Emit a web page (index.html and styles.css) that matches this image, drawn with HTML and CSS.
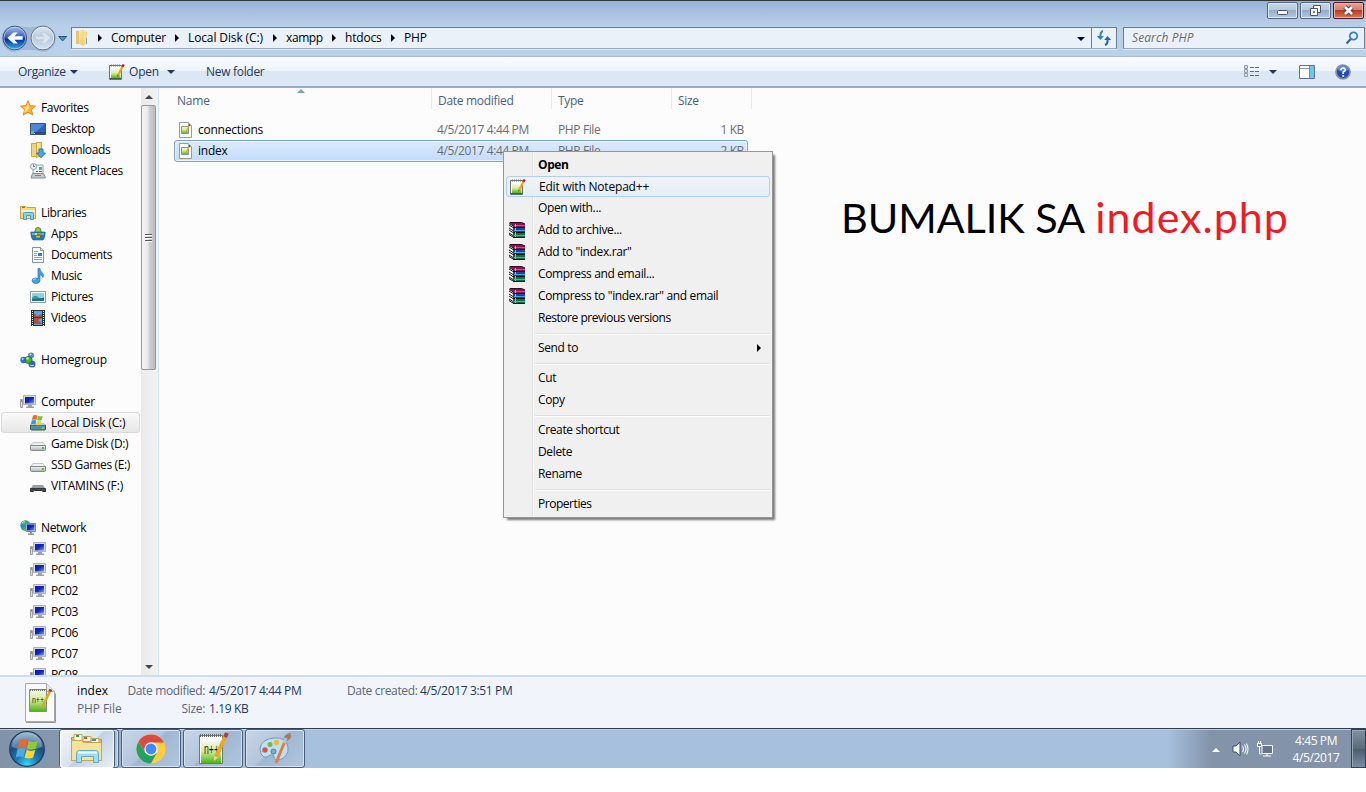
FILE: index.html
```html
<!DOCTYPE html>
<html lang="en">
<head>
<meta charset="utf-8">
<title>PHP</title>
<link rel="stylesheet" href="styles.css">
</head>
<body>
<svg class="defs" width="0" height="0">
  <defs>
    <linearGradient id="gFolder" x1="0" x2="1" y1="0" y2="1"><stop offset="0" stop-color="#fff0ae"/><stop offset="1" stop-color="#e5bf5c"/></linearGradient>
    <linearGradient id="gGreen" x1="0" x2="0" y1="0" y2="1"><stop offset="0" stop-color="#f4f8ef"/><stop offset=".45" stop-color="#d6ee9a"/><stop offset="1" stop-color="#4db314"/></linearGradient>
    <linearGradient id="gScreen" x1="0" x2="1" y1="0" y2="1"><stop offset="0" stop-color="#0a1bb0"/><stop offset=".5" stop-color="#1426b8"/><stop offset="1" stop-color="#7ba6f2"/></linearGradient>
    <linearGradient id="gDisk" x1="0" x2="0" y1="0" y2="1"><stop offset="0" stop-color="#f4f4f4"/><stop offset="1" stop-color="#aeb2b5"/></linearGradient>
    <linearGradient id="gBack" x1="0" x2="0" y1="0" y2="1"><stop offset="0" stop-color="#a9bfec"/><stop offset=".45" stop-color="#3b63c0"/><stop offset=".55" stop-color="#0a2f94"/><stop offset="1" stop-color="#2fb5f5"/></linearGradient>
    <linearGradient id="gFwd" x1="0" x2="0" y1="0" y2="1"><stop offset="0" stop-color="#dde7f2"/><stop offset=".5" stop-color="#b9cade"/><stop offset="1" stop-color="#d4e2f2"/></linearGradient>
    <radialGradient id="gOrb" cx=".5" cy=".95" r=".9"><stop offset="0" stop-color="#35dcff"/><stop offset=".35" stop-color="#1a7db5"/><stop offset=".7" stop-color="#1b4e7d"/><stop offset="1" stop-color="#7d9dbd"/></radialGradient>
    <symbol id="star" viewBox="0 0 16 16"><path d="M8 .8l2.100 4.900 5.300.4-4 3.500 1.300 5.400L8 12.200 3.300 15l1.300-5.400-4-3.500 5.300-.4z" fill="#ffb53a" stroke="#e8801c"/><path d="M8 2.500l1.300 4-1.300 4-4 2 1.300-4L2.600 7l3.700-.3z" fill="#ffe27e"/></symbol>
    <symbol id="desktop" viewBox="0 0 16 16"><path d="M.5 2.500h15v11H.5z" fill="#2c62bd" stroke="#3b506b"/><path d="M1 3h14L6 11H1z" fill="#4b86dc"/><path d="M1 11h14v2H1z" fill="#304a70"/><path d="M1 10h3v3H1z" fill="#4fbbe0"/><path d="M4 12h1v1H4z" fill="#ffe14a"/></symbol>
    <symbol id="downloads" viewBox="0 0 16 16"><path d="M1.500 1.500h5v13h-5z" fill="#f0d27a" stroke="#c9a449"/><path d="M6.500.5h5v13l-5 2z" fill="url(#gFolder)" stroke="#c9a449"/><path d="M9 7h4v4h2.500l-4.500 4.700L6.500 11H9z" fill="#49a7e4" stroke="#2477b8"/></symbol>
    <symbol id="recent" viewBox="0 0 16 16"><path d="M3 2h10v9H3z" fill="#eef3f8" stroke="#9aa6b2"/><path d="M9 4h3v3H9z" fill="#5ba2dc"/><path d="M6 8h2v1H6zM9 8h3v1H9z" fill="#1f73b8"/><path d="M2.500 10.500h11l2 4.500H1z" fill="#c4cbd2" stroke="#878f98"/><path d="M5 12h6v1H5z" fill="#7c848d"/><circle cx="3.500" cy="3.500" r="3" fill="#e9f2f7" stroke="#90a1af"/><path d="M3.500 1.500v2h1.500" fill="none" stroke="#52779a"/></symbol>
    <symbol id="libraries" viewBox="0 0 16 16"><path d="M.5 1.500h5l1 1h9v11H.5z" fill="#f3da86" stroke="#c5a24a"/><path d="M2 2h3v1H2z" fill="#3a9e40"/><path d="M1 5h14v2H1z" fill="#fbf0bc"/><path d="M3.500 14.500v-6q0-1 1-1h8q1 0 1 1v6h-3v-4h-4v4z" fill="#8fd0ee" stroke="#4b9ac4"/></symbol>
    <symbol id="apps" viewBox="0 0 16 16"><path d="M5 5q0-3.500 3-3.500T11 5v2H5z" fill="#9bc63a" stroke="#5b8b21"/><path d="M.8 6h14.400q0 6-2.200 8H3Q.8 12 .8 6z" fill="#2b78ae" stroke="#1f5d8e" stroke-width=".6"/><path d="M2 7h12v2H2z" fill="#68b4dc"/><path d="M5 7h2v2H5z" fill="#f1d333"/><path d="M7 8h3v2H7z" fill="#e54f37"/><path d="M6 10h4v1.500H6z" fill="#a4d43c"/><path d="M10 7h2v2h-2z" fill="#63bd3b"/></symbol>
    <symbol id="documents" viewBox="0 0 16 16"><path d="M2.500.5h8l3 3v12h-11z" fill="#fff" stroke="#83909e"/><path d="M10.500.5v3h3" fill="#dde5ec" stroke="#83909e"/><path d="M4 4.500h4M4 6.500h3M4 8.500h3M4 10.500h8M4 12.500h8" stroke="#8fa7bf"/><path d="M8 6h4v3H8z" fill="#2c80be"/></symbol>
    <symbol id="music" viewBox="0 0 16 16"><path d="M8 .5h2q0 2.500 2 4 2.500 2 1 5-.5-2-3-3v6q0 2.500-3.500 3T2 13q0-3 3.500-3L8 10.500z" fill="#3ba4e2" stroke="#2378b4" stroke-width=".7"/><path d="M3 12q1-1.500 3-1" stroke="#9fdcfa" fill="none"/></symbol>
    <symbol id="pictures" viewBox="0 0 16 16"><path d="M.5 2.500h15v11H.5z" fill="#fff" stroke="#8b99a6"/><path d="M2 4h12v8H2z" fill="#8bd0ef"/><path d="M2 9q3-4 6-1t6 0v4H2z" fill="#3c9d76"/><path d="M2 10l12-1v3H2z" fill="#246ba5"/></symbol>
    <symbol id="videos" viewBox="0 0 16 16"><path d="M1 0h14v16H1z" fill="#2b3137"/><path d="M4 1h8v14H4z" fill="#57a9dc"/><path d="M4 3l3 3 5-2v4l-4 2 4 4H4z" fill="#a85539"/><path d="M4 7.500h8" stroke="#263f59"/><path d="M2.500 1v15M13.500 1v15" stroke="#e7ebef" stroke-width="1" stroke-dasharray="1 1"/></symbol>
    <symbol id="homegroup" viewBox="0 0 16 16"><circle cx="3.500" cy="8" r="3.200" fill="#3769c8"/><circle cx="11" cy="3.500" r="3" fill="#547fdc"/><circle cx="12" cy="12" r="3.500" fill="#3260bf"/><circle cx="8.500" cy="8" r="3.500" fill="#3fb62c" stroke="#1d7a23"/><circle cx="7.500" cy="6.500" r="1.300" fill="#b7f29d"/><circle cx="2.700" cy="7" r="1.100" fill="#b8d3fa"/><circle cx="10.500" cy="2.400" r="1" fill="#c8ddfb"/><path d="M10 13q2 1.500 4 0" stroke="#d0e0fb" fill="none"/></symbol>
    <symbol id="pc" viewBox="0 0 16 16"><path d="M.5 5.500h2v8h-2z" fill="#d8dcdf" stroke="#9da2a7"/><path d="M1 6h1v2H1z" fill="#61b83f"/><path d="M3.500 1.500h12v9h-12z" fill="#d6d8da" stroke="#b0b3b6"/><path d="M5 3h9v6.500H5z" fill="url(#gScreen)"/><path d="M8 11h4v1.500h2V14H6v-1.500h2z" fill="#9da1a6"/></symbol>
    <symbol id="drive" viewBox="0 0 16 16"><path d="M3 6.500h10l2.500 3.500H.5z" fill="#f2f2f2" stroke="#c4c6c8"/><path d="M.5 9.500h15v4q0 1-1 1h-13q-1 0-1-1z" fill="url(#gDisk)" stroke="#85898d"/><path d="M12 11h2v2h-2z" fill="#4dc52e"/></symbol>
    <symbol id="usb" viewBox="0 0 16 16"><path d="M3 7h10l2.500 4H.5z" fill="#999da0"/><path d="M.5 10.500h15v3h-2.500l-1.500-1h-7L3 13.500H.5z" fill="#484c4f" stroke="#303336"/></symbol>
    <symbol id="windrive" viewBox="0 0 16 16"><path d="M.5 10h15v4q0 1-1 1h-13q-1 0-1-1z" fill="#598c9e" stroke="#3c5864"/><path d="M1 8h13l1 2H1z" fill="#b9cdd3"/><path d="M12 12h2v2h-2z" fill="#68df41"/><path d="M3 .5q2-1 4.500 0L6.500 5q-2.500-1-4.500 0z" fill="#ed6a2b"/><path d="M8.200.7q2 1 4.500 0l-1 4.300q-2.500 1-4.500 0z" fill="#83bf3b"/><path d="M1.800 5.500q2-1 4.500 0l-1 4q-2.500-1-4.500 0z" fill="#3c94dd"/><path d="M7 5.700q2 1 4.500 0l-1 4q-2.500 1-4.500 0z" fill="#f8ca32"/></symbol>
    <symbol id="network" viewBox="0 0 16 16"><circle cx="5.500" cy="5.500" r="5.200" fill="#2c8ad2"/><path d="M2 2q3-3 5 0L4 5 1 4zM2 7l4 1v3Q3 10 2 7z" fill="#3dba49"/><path d="M2 3q2-2 3-1" stroke="#baf0fd" fill="none"/><path d="M6 3.500h9.500v8H6z" fill="#bfc8d3" stroke="#828c98"/><path d="M7 4.500h7.500v6H7z" fill="url(#gScreen)"/><path d="M10 12h2v1.500h2V15H8v-1.500h2z" fill="#8b9ba9"/></symbol>
    <symbol id="npp" viewBox="0 0 16 16"><path d="M.5 1.500h12v14H.5z" fill="#fff" stroke="#6c6f6f"/><path d="M2 5h9.500v9H2z" fill="url(#gGreen)"/><path d="M1 14.500h11" stroke="#416039"/><path d="M2 1.500h10" stroke="#777" stroke-width="2" stroke-dasharray="1 1"/><path d="M13.500 2.500l-4.500 9" stroke="#f0a51f" stroke-width="2.300"/><path d="M14.700.5l-1.200 2.200" stroke="#9c2024" stroke-width="2.300"/><path d="M8.500 10.800l-.3 2 1.500-1.200z" fill="#4c3928"/></symbol>
    <symbol id="phpfile" viewBox="0 0 16 16"><path d="M1.500.5h9l3 3v12h-12z" fill="#fff" stroke="#999"/><path d="M10.500.5v3h3" fill="#eee" stroke="#aaa"/><path d="M3.500 4.500h7v7h-7z" fill="url(#gGreen)" stroke="#8d9389"/><path d="M11.500 3L8 10" stroke="#e6a12b" stroke-width="1.300"/><path d="M11.700 2.300l-.6 1.400" stroke="#8a1e1e" stroke-width="1.400"/></symbol>
    <symbol id="rar" viewBox="0 0 16 16"><path d="M0 .5h12.500L16 2v3.500H4z" fill="#8c1257"/><path d="M1 .5h11.500L16 2" fill="none" stroke="#2b0c1d"/><path d="M5 3.500h11" stroke="#c8508b"/><path d="M4 6h12v4.500H4z" fill="#124a93"/><path d="M5 8.500h11" stroke="#4f9fdc"/><path d="M4 5.500h12M4 10.500h12M4 15.500h12" stroke="#15101a"/><path d="M4 11h12v4H4z" fill="#0f7048"/><path d="M5 13.500h11" stroke="#3fc486"/><path d="M0 1l4 2.500V15L0 12z" fill="#f4f4f4"/><path d="M0 1.500L4.500 4M0 3l4 2.500M0 6l4 2.500M0 8l4 2.500M0 11l4 2.500M0 12.500l4 2.500" stroke="#1c161b"/><path d="M6.500 2v13" stroke="#d6b339" stroke-dasharray="3 1"/></symbol>
    <symbol id="flag" viewBox="0 0 22 20"><path d="M4 2q4-2 7 0L9.500 9q-3.500-2-7.500 0z" fill="#f0652a"/><path d="M12 2.500q4 2 8.500.5l-2 6.500q-4 2-8 0z" fill="#91c93d"/><path d="M1.700 10.300q4-2 7.500 0l-2 7.500q-3-2-7 0z" fill="#4da9e4"/><path d="M10.200 10.700q4 2 8 0l-2 7q-4 2-8 0z" fill="#ffd13b"/></symbol>
  </defs>
</svg>

<div class="window">
  <header class="frame">
    <div class="caption">
      <button class="cap"><svg width="29" height="15"><rect x="9.500" y="7.500" width="10" height="4" rx="1" fill="#f8f8f8" stroke="#4c5663"/></svg></button>
      <button class="cap"><svg width="29" height="15"><path d="M12.500 2.500h7v7h-7z" fill="#f8f8f8" stroke="#4c5663"/><path d="M9.500 5.500h7v7h-7z" fill="#f8f8f8" stroke="#4c5663"/><path d="M12.500 8.500h1v1h-1z" fill="#8da6c4" stroke="#4c5663"/></svg></button>
      <button class="cap close"><svg width="29" height="15"><path d="M11 4l7 7m0-7l-7 7" stroke="#59494f" stroke-width="4.800"/><path d="M11 4l7 7m0-7l-7 7" stroke="#fff" stroke-width="2.600"/></svg></button>
    </div>
    <div class="addressrow">
      <svg class="navbtns" width="72" height="32" viewBox="0 0 72 32">
        <path d="M15 3q14 4 28 0a13 13 0 0 1 0 27q-14-4-28 0a13 13 0 0 1 0-27z" fill="#9fb8d6"/>
        <circle cx="15" cy="16" r="12" fill="url(#gBack)" stroke="#465a7c"/><circle cx="15" cy="16" r="11" fill="none" stroke="#c1d9f4" stroke-opacity=".6"/>
        <path d="M23 14.300h-8.500l3.500-4h-4.300L7.500 16l6.200 5.700H18l-3.500-4H23z" fill="#fff"/>
        <circle cx="43.500" cy="16" r="12" fill="url(#gFwd)" stroke="#5f7289"/><circle cx="43.500" cy="16" r="11" fill="none" stroke="#eef4fb" stroke-opacity=".7"/>
        <path d="M36 14.300h8.500l-3.500-4h4.300L51.500 16l-6.200 5.700H41l3.500-4H36z" fill="#dbe5ef" stroke="#b7c6d7" stroke-width=".7"/>
        <path d="M59.500 14.500h8l-4 4.500z" fill="#4e8fc6" stroke="#244e80"/>
      </svg>
      <div class="address">
        <svg class="fold" width="16" height="18" viewBox="0 0 16 18"><path d="M2 2h5v13H2z" fill="#e7c56b"/><path d="M5 1h5v16l-5-2z" fill="url(#gFolder)"/><path d="M9 3l4-1v13l-4 2z" fill="#f5dc8a"/><path d="M12.500 9v6" stroke="#6faed5"/></svg>
        <i class="tri t1"></i><span class="c1">Computer</span><i class="tri"></i><span class="c2">Local Disk (C:)</span><i class="tri"></i><span class="c3">xampp</span><i class="tri"></i><span class="c4">htdocs</span><i class="tri"></i><span>PHP</span>
        <i class="down addrdown"></i>
        <div class="refresh"><svg width="16" height="16" viewBox="0 0 16 16"><path d="M7 1Q4 2 4.500 7" fill="none" stroke="#347fc4" stroke-width="2"/><path d="M.8 6h7L4.500 10z" fill="#347fc4"/><path d="M9 15q3-1 2.500-6" fill="none" stroke="#2b65a9" stroke-width="2"/><path d="M8.200 10h7L11.500 6z" fill="#2b65a9"/></svg></div>
      </div>
      <div class="search"><em>Search PHP</em><svg width="14" height="14" viewBox="0 0 14 14"><circle cx="8.500" cy="5" r="3.700" fill="#e4f3fd" stroke="#397fc3" stroke-width="1.800"/><path d="M5.800 8L1.500 12.500" stroke="#35689f" stroke-width="2.200"/></svg></div>
    </div>
  </header>

  <div class="toolbar">
    <span class="org">Organize</span><i class="down"></i>
    <svg class="ic tnpp"><use href="#npp"/></svg><span class="topen">Open</span><i class="down"></i>
    <span class="newf">New folder</span>
    <div class="views">
      <svg width="16" height="13" viewBox="0 0 16 13"><path d="M.5.5h3v3h-3zM.5 4.500h3v3h-3zM.5 8.500h3v3h-3z" fill="#fff" stroke="#929fae"/><path d="M1.500 2h1M1.500 10h1" stroke="#357abf"/><path d="M1.500 6h1" stroke="#d33"/><path d="M6 2.500h10M6 6.500h10M6 10.500h10" stroke="#576b83" stroke-dasharray="4 1"/></svg>
      <i class="down vd"></i>
      <svg class="pane" width="16" height="14" viewBox="0 0 16 14"><path d="M.5.5h15v13H.5z" fill="#fff" stroke="#56769d"/><path d="M1 3.500h9" stroke="#8097b3"/><path d="M10.500 1h4.500v12h-4.500z" fill="#72c5e3"/><path d="M10.500 1v12" stroke="#5794b2"/></svg>
      <svg class="help" width="16" height="16" viewBox="0 0 16 16"><circle cx="8" cy="8" r="7" fill="#2449b4" stroke="#8b929d" stroke-width="1.700"/><path d="M3 6a5 5 0 0 1 10 0q-5 3-10 0" fill="#6187de"/><path d="M5.700 6.200Q6 4 8 4t2.300 2Q10.300 7.200 8.200 8v2" fill="none" stroke="#fff" stroke-width="1.700"/><circle cx="8.200" cy="12" r="1.100" fill="#fff"/></svg>
    </div>
  </div>

  <main class="content">
    <nav class="tree">
      <div class="root"><svg class="ic"><use href="#star"/></svg><span>Favorites</span></div>
      <div><svg class="ic"><use href="#desktop"/></svg><span>Desktop</span></div>
      <div><svg class="ic"><use href="#downloads"/></svg><span>Downloads</span></div>
      <div><svg class="ic"><use href="#recent"/></svg><span>Recent Places</span></div>
      <div class="root gap"><svg class="ic"><use href="#libraries"/></svg><span>Libraries</span></div>
      <div><svg class="ic"><use href="#apps"/></svg><span>Apps</span></div>
      <div><svg class="ic"><use href="#documents"/></svg><span>Documents</span></div>
      <div><svg class="ic"><use href="#music"/></svg><span>Music</span></div>
      <div><svg class="ic"><use href="#pictures"/></svg><span>Pictures</span></div>
      <div><svg class="ic"><use href="#videos"/></svg><span>Videos</span></div>
      <div class="root gap wide"><svg class="ic"><use href="#homegroup"/></svg><span>Homegroup</span></div>
      <div class="root gap"><svg class="ic"><use href="#pc"/></svg><span>Computer</span></div>
      <div class="current wide"><svg class="ic"><use href="#windrive"/></svg><span>Local Disk (C:)</span></div>
      <div><svg class="ic"><use href="#drive"/></svg><span>Game Disk (D:)</span></div>
      <div><svg class="ic"><use href="#drive"/></svg><span>SSD Games (E:)</span></div>
      <div class="wide"><svg class="ic"><use href="#usb"/></svg><span>VITAMINS (F:)</span></div>
      <div class="root gap"><svg class="ic"><use href="#network"/></svg><span>Network</span></div>
      <div><svg class="ic"><use href="#pc"/></svg><span>PC01</span></div>
      <div><svg class="ic"><use href="#pc"/></svg><span>PC01</span></div>
      <div><svg class="ic"><use href="#pc"/></svg><span>PC02</span></div>
      <div><svg class="ic"><use href="#pc"/></svg><span>PC03</span></div>
      <div><svg class="ic"><use href="#pc"/></svg><span>PC06</span></div>
      <div><svg class="ic"><use href="#pc"/></svg><span>PC07</span></div>
      <div><svg class="ic"><use href="#pc"/></svg><span>PC08</span></div>
    </nav>
    <div class="scroll"><i class="up"></i><div class="thumb"><i></i><i></i><i></i></div><i class="down sd"></i></div>
    <section class="files">
      <div class="head"><span>Name<i class="sort"></i></span><span>Date modified</span><span>Type</span><span>Size</span></div>
      <div class="row"><svg class="ic"><use href="#phpfile"/></svg><b>connections</b><span>4/5/2017 4:44 PM</span><span>PHP File</span><span class="num">1 KB</span></div>
      <div class="row sel"><svg class="ic"><use href="#phpfile"/></svg><b>index</b><span>4/5/2017 4:44 PM</span><span>PHP File</span><span class="num">2 KB</span></div>
      <h1 class="note"><span class="dark">BUMALIK SA</span> <span class="red">index.php</span></h1>
    </section>
  </main>

  <footer class="details">
    <svg class="big" width="34" height="42" viewBox="0 0 34 42"><path d="M1.500 1.500h21l8 8v30h-29z" fill="#fafafa" stroke="#a9a9a9"/><path d="M2 40.500h29.500v-29" stroke="#999" fill="none"/><path d="M22.500 1.500v8h8" fill="#e6e6e6" stroke="#aaa"/><path d="M5.500 7.500h17v22h-17z" fill="url(#gGreen)" stroke="#888"/><path d="M6 8h16" stroke="#777" stroke-width="2" stroke-dasharray="1 1"/><text x="8" y="21" class="logo" font-size="9" textLength="12" lengthAdjust="spacingAndGlyphs">n++</text><path d="M26 9l-7.500 16" stroke="#e4a426" stroke-width="2.600"/><path d="M26.800 7.300l-1 2.200" stroke="#993735" stroke-width="3"/></svg>
    <div class="dcol d1"><span class="name">index</span><span>PHP File</span></div>
    <div class="dgrid"><span>Date modified:</span><b>4/5/2017 4:44 PM</b><span>Size:</span><b>1.19 KB</b></div>
    <div class="dgrid d3"><span>Date created:</span><b>4/5/2017 3:51 PM</b></div>
  </footer>
</div>

<div class="taskbar">
  <div class="startwrap"><svg width="38" height="38" viewBox="0 0 38 38"><circle cx="19" cy="19" r="17.300" fill="url(#gOrb)" stroke="#1d3c5b" stroke-width="1.200"/><path d="M4 17A15 15 0 0 1 34 17Q19 23 4 17z" fill="#d5e5f2" opacity=".35"/><use href="#flag" x="7.500" y="8" width="24" height="22"/></svg></div>
  <div class="tb stack"><div class="face"><svg width="34" height="32" viewBox="0 0 34 32"><path d="M1.500 4.500h9l1 2h20v21h-30z" fill="#e4c667" stroke="#b6903c"/><path d="M4 1.500h8v6H4zM13 3.500h8v5h-8zM21 5.500h8v5h-8z" fill="#fff" stroke="#b9a564"/><path d="M6 2h3v2H6z" fill="#2bab36"/><path d="M14 4h3v2h-3z" fill="#e74a30"/><path d="M22 6h4v2h-4z" fill="#328ed8"/><path d="M1.500 7.500h10l2 2h18v18h-30z" fill="#f7e29a" stroke="#c9a550"/><path d="M6.500 29.500v-9q0-3 3-3h16q3 0 3 3v9h-5v-6h-12v6z" fill="#a3dbf1" stroke="#61a8cf"/><path d="M8 19.500h19" stroke="#e7fbff" stroke-width="2"/></svg></div></div>
  <div class="tb"><svg width="30" height="30" viewBox="0 0 30 30"><circle cx="15" cy="15" r="14.500" fill="#ffce43"/><path d="M2.440 7.750A14.500 14.500 0 0 0 15 29.500L21 18.500H9z" fill="#22a160"/><path d="M2.440 7.750L9.200 18.400 15 8.500h13A14.500 14.500 0 0 0 2.440 7.750z" fill="#dd4b3e"/><circle cx="15" cy="15" r="6.700" fill="#f4f5f7"/><circle cx="15" cy="15" r="5.400" fill="#4487f5"/></svg></div>
  <div class="tb"><svg width="32" height="34" viewBox="0 0 32 34"><path d="M2.500 3.500h23v28h-23z" fill="#fff" stroke="#717971"/><path d="M4 9h20v22H4z" fill="url(#gGreen)"/><path d="M3 3.500h22" stroke="#6a6d69" stroke-width="3" stroke-dasharray="1 1"/><text x="7" y="22" class="logo" font-size="15" textLength="15" lengthAdjust="spacingAndGlyphs">n++</text><path d="M28 5l-9 20" stroke="#e8a825" stroke-width="4"/><path d="M30 1l-2 4.200" stroke="#a94342" stroke-width="4"/><path d="M17.200 24l-.2 5 3.800-3.400z" fill="#f4d59c"/></svg></div>
  <div class="tb"><svg width="34" height="34" viewBox="0 0 34 34"><path d="M16 6Q28 5 30 15q1 10-9 13-5 1-5-3 0-3-4-2-3 3-6 2-4-2-4-8Q3 7 16 6z" fill="#bfe0f2" stroke="#6c9cbd"/><circle cx="7" cy="18" r="2.700" fill="#e04f44"/><circle cx="12" cy="12.500" r="2.500" fill="#76b844"/><circle cx="18.500" cy="10.500" r="2.700" fill="#efb934"/><circle cx="15.500" cy="19.500" r="2.500" fill="#78aed2" stroke="#4a81aa"/><path d="M26 8q-1-5 6-7 3 5-3 8z" fill="#a97b5c"/><path d="M27 9L18 31" stroke="#df803d" stroke-width="3"/><path d="M28 6l-2 5" stroke="#b8c4cc" stroke-width="3"/></svg></div>
  <div class="tray">
    <i class="up white"></i>
    <svg class="vol" width="18" height="16" viewBox="0 0 18 16"><path d="M1 5h3l4-4v14l-4-4H1z" fill="#f5f7fa" stroke="#40516a"/><path d="M10.500 5q2 3 0 6M12.500 3.500q3 4.500 0 9M14.500 2.500q3 5.500 0 11" fill="none" stroke="#f2f6fa" stroke-width="1.100"/></svg>
    <svg class="net" width="16" height="16" viewBox="0 0 16 16"><path d="M5 4.500h10.500v8H5z" fill="#64768c" stroke="#f8f8f8"/><path d="M10 13v2M6 15h8M2.500 6v7h2" stroke="#fff" fill="none"/><path d="M.5 2.500h4v3h-4zM1.500 0v2M3.500 0v2" fill="#73859a" stroke="#fff"/></svg>
    <div class="clock"><span>4:45 PM</span><span>4/5/2017</span></div>
    <div class="show"></div>
  </div>
</div>

<div class="menu">
  <div class="mi def"><span>Open</span></div>
  <div class="mi hot"><svg class="ic"><use href="#npp"/></svg><span>Edit with Notepad++</span></div>
  <div class="mi"><span>Open with...</span></div>
  <div class="mi"><svg class="ic"><use href="#rar"/></svg><span>Add to archive...</span></div>
  <div class="mi"><svg class="ic"><use href="#rar"/></svg><span>Add to "index.rar"</span></div>
  <div class="mi"><svg class="ic"><use href="#rar"/></svg><span>Compress and email...</span></div>
  <div class="mi"><svg class="ic"><use href="#rar"/></svg><span>Compress to "index.rar" and email</span></div>
  <div class="mi tight"><span>Restore previous versions</span></div>
  <hr>
  <div class="mi"><span>Send to</span><i class="tri sub"></i></div>
  <hr>
  <div class="mi"><span>Cut</span></div>
  <div class="mi"><span>Copy</span></div>
  <hr>
  <div class="mi"><span>Create shortcut</span></div>
  <div class="mi"><span>Delete</span></div>
  <div class="mi"><span>Rename</span></div>
  <hr>
  <div class="mi tight"><span>Properties</span></div>
</div>
</body>
</html>
```
FILE: styles.css
```css
* { box-sizing: border-box; }
body { margin: 0; width: 1366px; height: 792px; overflow: hidden; background: #fff; color: #000; font: 12px/21px "Open Sans", "Noto Sans", sans-serif; font-stretch: 95%; letter-spacing: -0.2px; }
span, b, em { white-space: nowrap; }
b { font-weight: normal; }
svg { display: block; flex: none; }
i { flex: none; }
.defs { position: absolute; }
.ic { width: 16px; height: 16px; }
.logo { font-family: "Liberation Sans", sans-serif; letter-spacing: 0; fill: #181e17; }
.window { height: 728px; display: flex; flex-direction: column; }

.frame { height: 56px; border-top: 1px solid #35343a; background: linear-gradient(#98b3d3, #b8cfea 24px, #b9d1ea); }
.caption { display: flex; justify-content: flex-end; gap: 2px; height: 22px; padding: 1px 2px 0 0; }
.cap { width: 31px; height: 17px; padding: 0; border: 1px solid #53657f; border-radius: 2px; background: linear-gradient(#c7d7e9, #b5c9df 48%, #92acca 50%, #b4cae2); box-shadow: inset 0 0 0 1px #dce8f4; }
.close { border-color: #4c1523; background: linear-gradient(#e6a295, #d97b69 48%, #bb3b22 50%, #d67a50); box-shadow: inset 0 0 0 1px #eeb6a8; }
.addressrow { display: flex; height: 32px; }
.navbtns { margin-top: -1px; width: 71px; }
.address { display: flex; align-items: center; width: 1046px; height: 22px; margin-top: 4px; border: 1px solid #6b7d93; border-bottom-color: #98a9bb; background: #eaf1f9; box-shadow: 0 1px #dce8f5; }
.fold { margin-left: 2px; }
.tri { width: 0; height: 0; border: 4px solid transparent; border-left: 4px solid #000; border-right: 0; }
.address .tri { margin-right: 9px; }
.address .t1 { margin-left: 8px; }
.address span { margin-top: -1px; color: #000; }
.c1 { width: 64px; }
.address .c2 { width: 85px; letter-spacing: -0.12px; }
.address .c3 { width: 46px; letter-spacing: -0.4px; }
.c4 { width: 46px; }
.down { width: 0; height: 0; border: 4px solid transparent; border-top: 4px solid #1e3a66; border-bottom: 0; }
.addrdown { margin: 1px 6px 0 auto; border-top-color: #00003a; }
.refresh { width: 25px; height: 20px; padding: 2px 4px; border-left: 1px solid #6b7d93; }
.search { display: flex; align-items: center; width: 242px; height: 22px; margin: 4px 0 0 6px; padding: 0 5px 0 8px; border: 1px solid #6b7d93; border-bottom-color: #98a9bb; background: #eaf1f9; color: #6d6d6d; letter-spacing: 0.1px; box-shadow: 0 1px #dce8f5; }
.search em { margin-top: -1px; }
.search svg { margin-left: auto; }

.toolbar { display: flex; align-items: center; height: 32px; padding-left: 18px; border-top: 1px solid #a7bad2; border-bottom: 2px solid #98acc9; background: linear-gradient(#fafdff, #eef4fb 48%, #dce6f4 50%, #dde9f7); color: #1e395b; }
.org { width: 52px; letter-spacing: -0.3px; }
.tnpp { margin-left: 31px; }
.topen { width: 38px; margin-left: 4px; }
.newf { margin-left: 31px; letter-spacing: -0.3px; }
.views { display: flex; align-items: center; margin-left: auto; padding-right: 15px; }
.vd { margin-left: 9px; }
.pane { margin-left: 22px; }
.help { margin-left: 20px; }

.content { display: flex; height: 587px; background: #fcfcfc; }
.tree { width: 141px; padding-top: 9px; overflow: hidden; letter-spacing: -0.35px; }
.tree div { display: flex; align-items: center; height: 21px; margin-left: 1px; padding-left: 29px; }
.tree .wide { letter-spacing: -0.15px; }
.tree .ic { margin-right: 5px; }
.tree .root { padding-left: 19px; }
.tree .gap { margin-top: 21px; }
.tree .current { width: 139px; padding-left: 28px; border: 1px solid #d9d9d9; border-radius: 3px; background: linear-gradient(#fafafa, #e6e6e6); }
.scroll { display: flex; flex-direction: column; align-items: center; width: 17px; height: 587px; padding-right: 2px; border-left: 1px solid #e9e9e9; background: linear-gradient(90deg, #ebebeb, #f2f2f2); }
.up { width: 0; height: 0; border: 4px solid transparent; border-bottom: 4px solid #444; border-top: 0; margin-top: 7px; }
.thumb { display: flex; flex-direction: column; align-items: center; justify-content: center; gap: 1px; width: 15px; height: 265px; margin: 6px 0 0 -1px; border: 1px solid #979797; border-radius: 2px; background: linear-gradient(90deg, #f5f5f5, #e9e9eb 45%, #d1d1d5 55%, #b9b9c0); }
.thumb i { width: 7px; height: 2px; border-top: 1px solid #555; background: #fff; }
.sd { margin: auto 0 6px; border-top-color: #444; }
.files { flex: 1; padding-left: 15px; border-left: 1px solid #d5e4f3; }
.head { display: grid; grid-template-columns: 258px 120px 120px 80px; height: 21px; margin-bottom: 10px; color: #4c607a; letter-spacing: -0.3px; }
.head span { height: 21px; padding: 2px 0 0 6px; border-right: 1px solid #e3e9f1; }
.head span:first-child { display: flex; padding-left: 3px; letter-spacing: -0.2px; }
.sort { width: 0; height: 0; margin: -1px 0 0 87px; border: 4px solid transparent; border-top: 0; border-bottom: 4px solid #6ba6bf; }
.row { display: grid; grid-template-columns: 18px 241px 121px 120px 66px; align-items: center; width: 575px; height: 21px; padding-left: 4px; color: #6d6d6d; letter-spacing: -0.38px; }
.row b { padding-left: 2px; color: #000; letter-spacing: -0.25px; }
.row .num { text-align: right; }
.sel { width: 574px; height: 22px; padding-left: 3px; border: 1px solid #7da2ce; border-radius: 3px; background: linear-gradient(#dcebfd, #c1dcfc); box-shadow: inset 0 0 0 1px #ebf4fe; }
.sel span, .sel b { margin-top: -1px; }
.note { margin: 30px 0 0 667px; font: 41.5px/50px Lato, sans-serif; letter-spacing: -0.1px; white-space: nowrap; }
.red { margin-left: 1px; font-size: 43px; letter-spacing: 1px; color: #ed1c24; }

.details { display: flex; height: 53px; border-top: 2px solid #cfdeee; background: #f1f5fb; color: #5a6779; line-height: 18px; padding: 5px 0 0 24px; }
.big { width: 34px; height: 42px; }
.dcol { display: flex; flex-direction: column; width: 50px; margin-left: 19px; letter-spacing: -0.1px; }
.details .name { color: #000; letter-spacing: 0.1px; }
.dgrid { display: grid; grid-template-columns: 78px auto; grid-auto-rows: 18px; column-gap: 4px; width: 220px; letter-spacing: -0.35px; }
.dgrid span { text-align: right; }
.dgrid b { color: #1e395b; }
.d3 { grid-template-columns: 69px auto; }

.taskbar { display: flex; height: 40px; border-top: 1px solid #2f3d4e; background: linear-gradient(90deg, #8093a9, #8698af 59px, #a7c0de 150px, #a7c0de 1168px, #8394aa 1210px); box-shadow: inset 0 1px #bdd0e6; }
.startwrap { width: 59px; padding: 1px 0 0 8px; }
.tb { display: flex; align-items: center; justify-content: center; width: 60px; height: 39px; margin-right: 2px; border: 1px solid #495d78; border-radius: 3px; background: linear-gradient(135deg, #c7d6e7, #b4c6dc 45%, #9fb7d1 50%, #b2c6dd); box-shadow: inset 0 0 0 1px #d5e3f0; }
.stack { justify-content: flex-start; }
.face { display: flex; align-items: center; justify-content: center; width: 55px; height: 38px; border-right: 1px solid #495d78; border-radius: 3px; background: linear-gradient(135deg, #f3f7fb, #d8e3ef 48%, #c2d1e2 50%, #eaf1f8); box-shadow: inset 0 0 0 1px #fff; }
.tray { display: flex; align-items: center; margin-left: auto; color: #fff; }
.white { margin: 2px 12px 0 0; border-bottom-color: #fff; }
.vol { margin-right: 7px; }
.clock { display: flex; flex-direction: column; align-items: center; width: 62px; margin: 1px 4px 0 12px; line-height: 17px; letter-spacing: -0.4px; }
.show { width: 15px; height: 39px; border: 1px solid #334354; background: linear-gradient(#84909e, #5b6b7c 50%, #4b5b6e 51%, #7a8da4); box-shadow: inset 1px 1px #98a6b6; }

.menu { position: absolute; left: 503px; top: 151px; width: 270px; height: 367px; padding: 2px; border: 1px solid #979797; background: linear-gradient(90deg, transparent 28px, #e0e0e0 28px, #e0e0e0 29px, #fff 29px, #fff 30px, transparent 30px) #f0f0f0; box-shadow: 3px 3px 2px -1px #777; letter-spacing: -0.36px; }
.mi { display: flex; align-items: center; height: 22px; }
.mi .ic { margin: 0 -19px 0 3px; }
.mi span { margin: -1px 0 0 32px; }
.tight { letter-spacing: -0.46px; }
.def { font-weight: bold; letter-spacing: -0.4px; }
.hot { height: 21px; border: 1px solid #aecff7; border-radius: 3px; background: linear-gradient(#f1f4f8, #e5edf7); letter-spacing: -0.2px; }
.hot .ic { margin: 0 -18px 0 3px; }
.hot span { margin: 0 0 0 31px; }
.sub { margin: 0 9px 0 auto; }
.menu hr { height: 2px; margin: 4px 0 2px 29px; border: 0; border-top: 1px solid #e0e0e0; background: #fff; }
```
